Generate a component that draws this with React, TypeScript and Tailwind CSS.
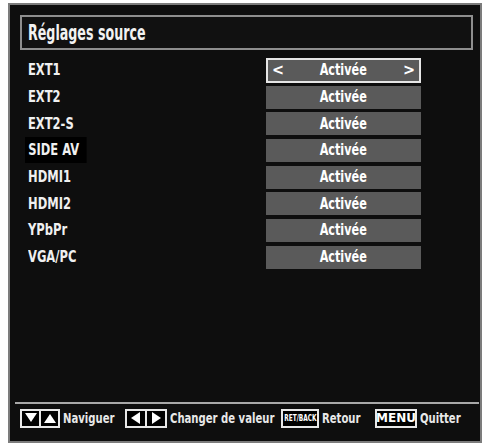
import React from "react";

const sources = ["EXT1", "EXT2", "EXT2-S", "SIDE AV", "HDMI1", "HDMI2", "YPbPr", "VGA/PC"];

const font = { fontFamily: '"DejaVu Sans", sans-serif', fontStretch: "condensed" };

function Tri({ dir }: { dir: "up" | "down" | "left" | "right" }) {
  const pts = {
    up: "1,12 7,3 13,12",
    down: "1,2 13,2 7,11",
    left: "11,1 11,13 2,7",
    right: "3,1 3,13 12,7",
  }[dir];
  return (
    <svg viewBox="0 0 14 14" className="h-[14px] w-[14px]">
      <polygon points={pts} fill="#fff" />
    </svg>
  );
}

function KeyBox({ children, className = "" }: { children: React.ReactNode; className?: string }) {
  return (
    <span className={`flex h-[19px] items-center justify-center border-2 border-[#e8e8e8] bg-black ${className}`}>
      {children}
    </span>
  );
}

// the TV font is much narrower than anything installed, so squeeze it horizontally
function FootText({ w, children }: { w: string; children: React.ReactNode }) {
  return (
    <span className={`ml-[3px] block overflow-visible ${w}`}>
      <span className="inline-block origin-left scale-x-[0.8] whitespace-nowrap">{children}</span>
    </span>
  );
}

export default function App() {
  return (
    <div className="h-[445px] w-[484px] bg-white pl-[8px] pt-[3px]" style={font}>
      <div className="flex h-[440px] w-[474px] flex-col border-2 border-[#7c7c7c] bg-[#0e0e0e]">
        <div className="ml-[10px] mt-[10px] flex h-[35px] w-[453px] items-center border-2 border-[#8e8e8e] bg-[#111] pl-[6px]">
          <span className="inline-block origin-left scale-x-[0.64] whitespace-nowrap text-[22px] font-bold text-[#f2f2f2]">
            Réglages source
          </span>
        </div>

        <div className="mt-[7px] flex flex-col pl-[18px]">
          {sources.map((s, i) => (
            <div key={s} className="flex h-[26.7px] items-center">
              <div className="w-[238px]">
                <span
                  className={`inline-flex h-[26px] origin-left scale-x-[0.8] items-center whitespace-nowrap text-[16px] font-bold text-[#f0f0f0] ${
                    s === "SIDE AV" ? "-ml-[3px] bg-black pl-[4px] pr-[9px]" : ""
                  }`}
                >
                  {s}
                </span>
              </div>
              {i === 0 ? (
                <div className="flex h-[25px] w-[155px] items-center justify-between border-2 border-[#e6e6e6] bg-[#5a5a5a] px-[4px] text-[16px] font-bold text-white">
                  <span>&lt;</span>
                  <span className="inline-block scale-x-[0.78]">Activée</span>
                  <span>&gt;</span>
                </div>
              ) : (
                <div className="flex h-[23px] w-[155px] items-center justify-center bg-[#5a5a5a] text-[16px] font-bold text-white">
                  <span className="inline-block scale-x-[0.78]">Activée</span>
                </div>
              )}
            </div>
          ))}
        </div>

        <div className="mt-auto mb-[13px] ml-[5px] mr-[1px] border-t-2 border-[#a8a8a8] pt-[4px]">
          <div className="flex h-[20px] items-center pl-[5px] text-[14px] font-bold text-[#e8e8e8]">
            <span className="flex">
              <KeyBox className="w-[21px]">
                <Tri dir="down" />
              </KeyBox>
              <KeyBox className="-ml-[2px] w-[21px]">
                <Tri dir="up" />
              </KeyBox>
            </span>
            <FootText w="w-[47px]">Naviguer</FootText>

            <span className="ml-[15px] flex">
              <KeyBox className="w-[22px]">
                <Tri dir="left" />
              </KeyBox>
              <KeyBox className="-ml-[2px] w-[22px]">
                <Tri dir="right" />
              </KeyBox>
            </span>
            <FootText w="w-[97px]">Changer de valeur</FootText>

            <KeyBox className="ml-[14px] w-[38px]">
              <span className="inline-block scale-x-[0.72] whitespace-nowrap text-[9px] font-bold leading-none text-white">
                RET/BACK
              </span>
            </KeyBox>
            <FootText w="w-[39px]">Retour</FootText>

            <KeyBox className="ml-[14px] w-[42px]">
              <span className="text-[12px] font-bold leading-none text-white" style={{ fontStretch: "normal" }}>
                MENU
              </span>
            </KeyBox>
            <FootText w="w-[38px]">Quitter</FootText>
          </div>
        </div>
      </div>
    </div>
  );
}
